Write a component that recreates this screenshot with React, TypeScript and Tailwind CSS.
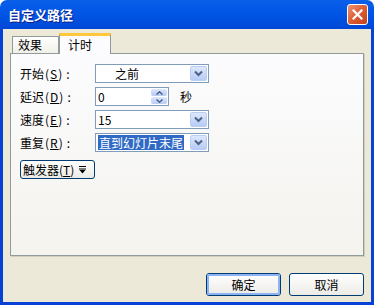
const font = "font-['Noto_Sans_CJK_SC','Noto_Sans',sans-serif]";

function Chevron() {
  return (
    <svg width="9" height="7" viewBox="0 0 9 7">
      <path d="M1 1.5 L4.5 5 L8 1.5" fill="none" stroke="#4d6185" strokeWidth="2" />
    </svg>
  );
}

function DropButton() {
  return (
    <div className="flex w-[17px] items-center justify-center self-stretch rounded-[2px] border border-[#b9cdf5] bg-gradient-to-b from-[#dde7fd] to-[#b7cbf5]">
      <Chevron />
    </div>
  );
}

function Combo({ text, selected, indent }: { text: string; selected?: boolean; indent?: boolean }) {
  return (
    <div className="flex h-[19px] w-[114px] items-stretch border border-[#7f9db9] bg-white p-px">
      <div className={`flex flex-1 items-center ${indent ? "pl-[18px]" : "pl-[1px]"}`}>
        <span
          className={
            selected
              ? "bg-[#316ac5] px-px text-[12px] leading-[15px] text-white"
              : "text-[12px] leading-[15px] text-black"
          }
        >
          {text}
        </span>
      </div>
      <DropButton />
    </div>
  );
}

function Spin() {
  return (
    <div className="flex h-[19px] w-[74px] items-stretch border border-[#7f9db9] bg-white p-px">
      <div className="flex flex-1 items-center pl-[1px] text-[12px] leading-[15px]">0</div>
      <div className="flex w-[16px] flex-col gap-px">
        <div className="flex flex-1 items-center justify-center rounded-[2px] bg-gradient-to-b from-[#dde7fd] to-[#b7cbf5]">
          <svg width="7" height="4" viewBox="0 0 7 4">
            <path d="M0.5 3.5 L3.5 0.8 L6.5 3.5" fill="none" stroke="#4d6185" strokeWidth="1.5" />
          </svg>
        </div>
        <div className="flex flex-1 items-center justify-center rounded-[2px] bg-gradient-to-b from-[#dde7fd] to-[#b7cbf5]">
          <svg width="7" height="4" viewBox="0 0 7 4">
            <path d="M0.5 0.5 L3.5 3.2 L6.5 0.5" fill="none" stroke="#4d6185" strokeWidth="1.5" />
          </svg>
        </div>
      </div>
    </div>
  );
}

function Label({ text, key_ }: { text: string; key_: string }) {
  return (
    <div className="w-[75px] text-[12px] leading-[15px] text-black">
      {text}
      <span className="ml-[1px] tracking-[1px]">
        (<span className="underline">{key_}</span>)
      </span>
      <span className="ml-[3px]">:</span>
    </div>
  );
}

function XpButton({ text, focused }: { text: string; focused?: boolean }) {
  return (
    <div className="flex h-[23px] w-[75px] items-center justify-center rounded-[3px] border border-[#003c74] bg-gradient-to-b from-white to-[#ecebe6]">
      <div
        className={`flex h-full w-full items-center justify-center rounded-[2px] ${
          focused ? "border-2 border-[#8cb4f2]" : "border-2 border-transparent"
        } text-[12px] leading-none text-black`}
      >
        {text}
      </div>
    </div>
  );
}

export default function App() {
  return (
    <div className={`flex h-[305px] w-[374px] flex-col ${font}`}>
      <div className="flex h-[29px] items-center justify-between rounded-t-[7px] bg-gradient-to-b from-[#0a5fe8] via-[#0055e5] to-[#0047d6] pl-[8px] pr-[6px]">
        <span className="text-[13px] font-bold leading-none text-white [text-shadow:1px_1px_#0a1e88]">
          自定义路径
        </span>
        <div className="flex h-[21px] w-[21px] items-center justify-center rounded-[3px] border border-white bg-gradient-to-br from-[#ec9274] via-[#dc5d33] to-[#c1401b]">
          <svg width="11" height="11" viewBox="0 0 11 11">
            <path d="M1.5 1.5 L9.5 9.5 M9.5 1.5 L1.5 9.5" stroke="white" strokeWidth="2.2" strokeLinecap="square" />
          </svg>
        </div>
      </div>
      <div className="flex flex-1 flex-col border-x-[3px] border-b-[3px] border-[#0841d6] bg-[#ece9d8]">
        <div className="flex items-end pl-[9px] pt-[4px]">
          <div className="flex h-[17px] w-[47px] items-center border border-b-0 border-[#919b9c] bg-gradient-to-b from-white to-[#f0efe8] pl-[5px] text-[12px] leading-none">
            效果
          </div>
          <div className="relative -mb-px flex h-[21px] w-[52px] items-center border-x border-[#919b9c] border-t-[3px] border-t-[#ffc83c] bg-[#fcfcfe] pl-[8px] text-[12px] leading-none">
            计时
          </div>
        </div>
        <div className="ml-[7px] flex h-[203px] w-[354px] flex-col border border-[#919b9c] bg-gradient-to-b from-[#fcfcfe] to-[#f4f3ee] pl-[9px] pt-[10px] shadow-[1px_1px_0_#d0cec1]">
          <div className="flex items-center">
            <Label text="开始" key_="S" />
            <Combo text="之前" indent />
          </div>
          <div className="mt-[4px] flex items-center">
            <Label text="延迟" key_="D" />
            <Spin />
            <span className="ml-[11px] text-[12px] leading-none">秒</span>
          </div>
          <div className="mt-[4px] flex items-center">
            <Label text="速度" key_="E" />
            <Combo text="15" />
          </div>
          <div className="mt-[4px] flex items-center">
            <Label text="重复" key_="R" />
            <Combo text="直到幻灯片末尾" selected />
          </div>
          <div className="mt-[8px] flex h-[19px] w-[75px] items-center rounded-[3px] border border-[#003c74] bg-gradient-to-b from-white to-[#ecebe6] pl-[2px] text-[12px] leading-none">
            触发器(<span className="underline">T</span>)
            <svg className="ml-[5px]" width="7" height="8" viewBox="0 0 7 8">
              <path d="M0 0.5 H7 M0 3 H7" stroke="black" strokeWidth="1" />
              <path d="M0.5 4 L3.5 7.5 L6.5 4 Z" fill="black" />
            </svg>
          </div>
        </div>
        <div className="mt-[17px] flex justify-end gap-[8px] pr-[7px]">
          <XpButton text="确定" focused />
          <XpButton text="取消" />
        </div>
      </div>
    </div>
  );
}
